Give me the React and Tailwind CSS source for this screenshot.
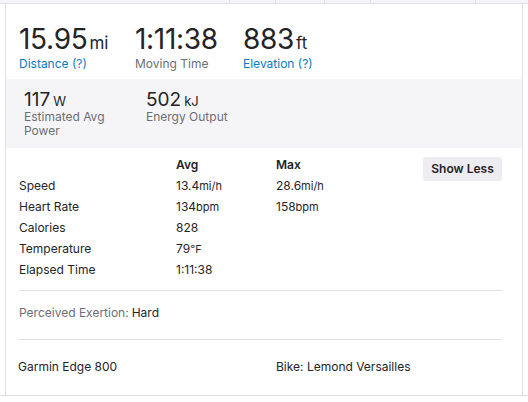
import React from 'react'

const font = { fontFamily: 'Inter, "Noto Sans", sans-serif' }

function BigStat({ value, unit, label, link }) {
  return (
    <div>
      <div className="flex items-baseline text-[#242428]">
        <span className="text-[28px] leading-[32px] tracking-[-0.3px]">{value}</span>
        <span className="ml-[2px] text-[17px] leading-[20px]">{unit}</span>
      </div>
      <div className={`mt-[1px] text-[12px] leading-[16px] ${link ? 'text-[#0b7bbf]' : 'text-[#6d6d78]'}`}>{label}</div>
    </div>
  )
}

function SmallStat({ value, unit, label }) {
  return (
    <div>
      <div className="flex items-baseline text-[#242428]">
        <span className="text-[19px] leading-[21px]">{value}</span>
        <span className="ml-[3px] text-[13px] leading-[16px]">{unit}</span>
      </div>
      <div className="text-[12px] leading-[14px] text-[#6d6d78]">{label}</div>
    </div>
  )
}

const rows = [
  { label: 'Speed', avg: '13.4', avgUnit: 'mi/h', max: '28.6', maxUnit: 'mi/h' },
  { label: 'Heart Rate', avg: '134', avgUnit: 'bpm', max: '158', maxUnit: 'bpm' },
  { label: 'Calories', avg: '828' },
  { label: 'Temperature', avg: '79', avgUnit: '℉' },
  { label: 'Elapsed Time', avg: '1:11:38' },
]

export default function App() {
  return (
    <div className="w-[528px] h-[402px] bg-white overflow-hidden flex flex-col" style={font}>
      {/* top tab strip */}
      <div className="h-[4px] shrink-0 flex bg-[#f5f5f8] border-b border-[#dfdfe8]">
        <div className="w-[230px] border-r border-[#dfdfe8]" />
        <div className="w-[46px] border-r border-[#dfdfe8]" />
        <div className="w-[49px] border-r border-[#dfdfe8]" />
        <div className="w-[46px] border-r border-[#dfdfe8]" />
        <div className="w-[105px] border-r border-[#dfdfe8]" />
        <div className="flex-1" />
      </div>

      <div className="flex h-[392px] shrink-0 border-b border-[#dfdfe8]">
        <div className="w-[5px] shrink-0" />
        <div className="w-[518px] shrink-0 border-l border-r border-[#dfdfe8] flex flex-col">
          {/* headline stats */}
          <div className="flex pl-[13px] pt-[19px] h-[75px]">
            <div className="w-[116px]"><BigStat value="15.95" unit="mi" label="Distance (?)" link /></div>
            <div className="w-[108px]"><BigStat value="1:11:38" label="Moving Time" /></div>
            <div><BigStat value="883" unit="ft" label="Elevation (?)" link /></div>
          </div>

          {/* secondary stats */}
          <div className="bg-[#f5f5f7] h-[69px] flex pl-[18px] pt-[10px]">
            <div className="w-[122px]"><SmallStat value="117" unit="W" label={<>Estimated Avg<br />Power</>} /></div>
            <div><SmallStat value="502" unit="kJ" label="Energy Output" /></div>
          </div>

          {/* more stats table */}
          <div className="flex pl-[13px] pr-[20px] pt-[7px]">
            <div className="flex-1 text-[12px] text-[#242428]">
              <div className="flex h-[20px] items-center font-semibold">
                <div className="w-[157px]" />
                <div className="w-[100px]">Avg</div>
                <div>Max</div>
              </div>
              {rows.map((r) => (
                <div key={r.label} className="flex h-[21px] items-center">
                  <div className="w-[157px]">{r.label}</div>
                  <div className="w-[100px]">{r.avg}<span className="text-[11px]">{r.avgUnit}</span></div>
                  <div>{r.max}<span className="text-[11px]">{r.maxUnit}</span></div>
                </div>
              ))}
            </div>
            <button className="mt-[2px] h-[24px] w-[79px] rounded-[3px] bg-[#ededf1] text-[12px] font-semibold text-[#242428]">
              Show Less
            </button>
          </div>

          <div className="ml-[13px] mr-[20px] mt-[10px] border-t border-[#dfdfe8]" />
          <div className="h-[48px] flex items-start pt-[14px] pl-[13px] text-[12px] leading-[16px] text-[#6d6d78]">
            Perceived Exertion:<span className="ml-[3px] text-[#242428]">Hard</span>
          </div>
          <div className="ml-[13px] mr-[20px] border-t border-[#dfdfe8]" />

          <div className="flex pl-[12px] pt-[19px] text-[12px] leading-[16px] text-[#242428]">
            <div className="w-[258px]">Garmin Edge 800</div>
            <div>Bike: Lemond Versailles</div>
          </div>
        </div>
      </div>
    </div>
  )
}
